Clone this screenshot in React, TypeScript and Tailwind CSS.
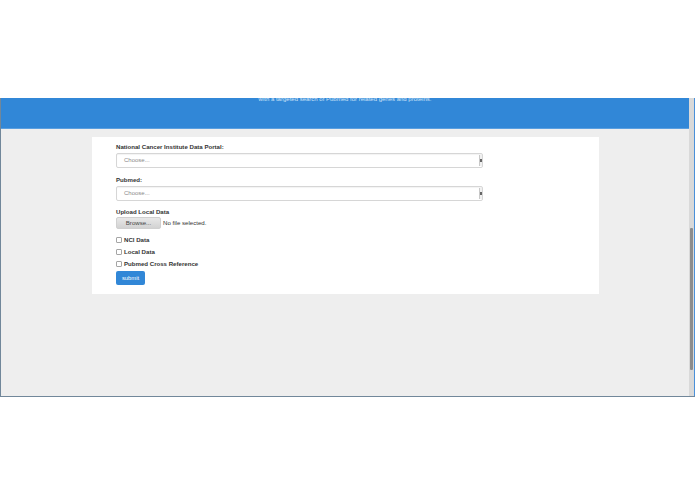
import React from "react";

function SelectBox() {
  return (
    <div className="flex h-[15px] w-[367px] items-center justify-between rounded-[2px] border border-[#d6d6d6] bg-white pl-[7px] shadow-[inset_0_1px_1px_rgba(0,0,0,0.05)]">
      <span className="text-[6px] text-[#8a8a8a]">Choose...</span>
      <div className="flex h-[11px] w-[3px] flex-col items-center justify-center border-l border-[#c8c8c8] bg-[#f0f0f0]">
        <div className="h-[3px] w-[2px] bg-[#666]" />
      </div>
    </div>
  );
}

function Check({ label }: { label: string }) {
  return (
    <div className="flex h-[12px] items-center gap-[2px]">
      <div className="h-[6px] w-[6px] rounded-[1px] border border-[#a5a5a5] bg-white" />
      <span className="text-[6.1px] font-bold text-[#333]">{label}</span>
    </div>
  );
}

export default function App() {
  return (
    <div
      className="flex h-[494px] w-[695px] flex-col bg-white"
      style={{ fontFamily: '"Liberation Sans", Arial, sans-serif' }}
    >
      <div className="h-[98px] shrink-0" />
      <div className="flex h-[299px] shrink-0 border-b border-l border-[#71879a]">
        <div className="flex flex-1 flex-col overflow-hidden bg-[#eeeeee]">
          <div className="flex h-[31px] shrink-0 justify-center overflow-hidden border-b border-[#5a9fe0] bg-[#3187d7]">
            <span className="mt-[-3px] text-[6px] leading-[8px] text-[#cfe3f7]">
              with a targeted search of Pubmed for related genes and proteins.
            </span>
          </div>
          <div className="pl-[91px] pt-[8px]">
            <div className="flex h-[157px] w-[507px] flex-col bg-white pl-[24px] pt-[6px]">
              <div className="text-[6.1px] font-bold leading-[8px] text-[#333]">
                National Cancer Institute Data Portal:
              </div>
              <div className="mt-[2px]">
                <SelectBox />
              </div>
              <div className="mt-[8px] text-[6.1px] font-bold leading-[8px] text-[#333]">
                Pubmed:
              </div>
              <div className="mt-[2px]">
                <SelectBox />
              </div>
              <div className="mt-[7px] text-[6.1px] font-bold leading-[8px] text-[#333]">
                Upload Local Data
              </div>
              <div className="mt-[1px] flex items-center gap-[2px]">
                <div className="flex h-[12px] w-[45px] items-center justify-center rounded-[2px] border border-[#d0d0d0] bg-gradient-to-b from-[#e8e8e8] to-[#d2d2d2] text-[6.1px] text-[#444]">
                  Browse...
                </div>
                <span className="text-[6.1px] text-[#333]">No file selected.</span>
              </div>
              <div className="mt-[5px] flex flex-col">
                <Check label="NCI Data" />
                <Check label="Local Data" />
                <Check label="Pubmed Cross Reference" />
              </div>
              <div className="mt-[1px] flex h-[14px] w-[29px] items-center justify-center rounded-[2px] bg-[#3187d7] text-[5.8px] text-white">
                submit
              </div>
            </div>
          </div>
        </div>
        <div className="flex w-[5px] shrink-0 flex-col bg-[#d9d9d9] pt-[130px] pb-[26px]">
          <div className="mx-auto w-[3px] flex-1 rounded-[1px] bg-[#8c8c8c]" />
        </div>
        <div className="w-[1px] shrink-0 bg-[#4a90d9]" />
      </div>
    </div>
  );
}
